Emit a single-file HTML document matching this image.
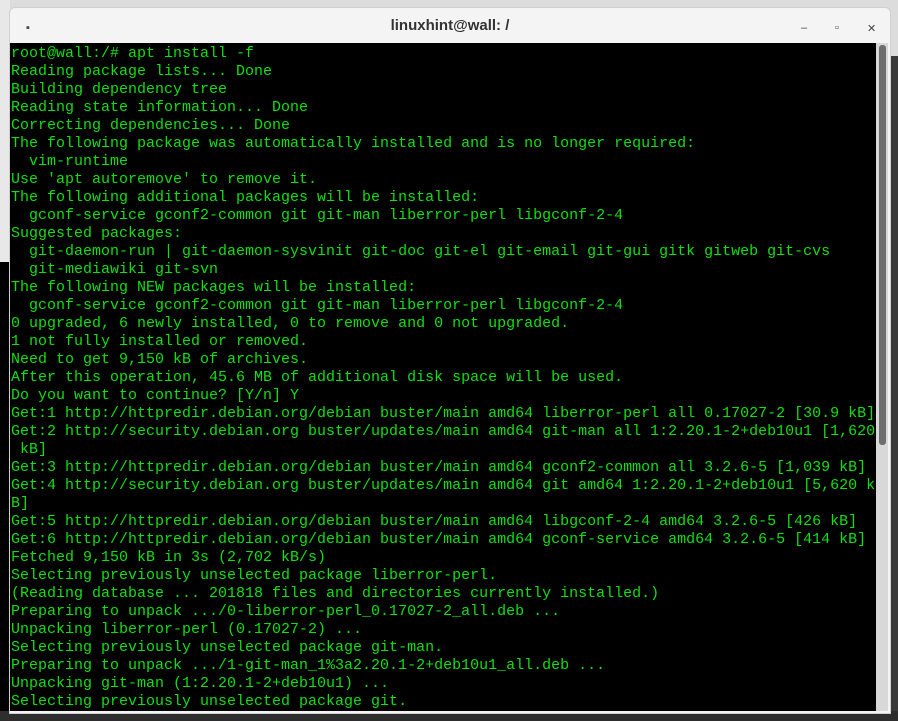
<!DOCTYPE html>
<html><head><style>
body{margin:0;width:898px;height:721px;overflow:hidden;background:#dcdcdc;position:relative;font-family:"Liberation Sans",sans-serif}
.left{position:absolute;left:0;top:0;width:10px;height:721px;background:#e8e8e8}
.leftdark{position:absolute;left:0;top:262px;width:10px;height:459px;background:#000}
.rightbg{position:absolute;left:889px;top:0;width:9px;height:721px;background:#dcdcdc}
.rightdark{position:absolute;left:889px;top:56px;width:9px;height:665px;background:#3a3a3a}
.bottom{position:absolute;left:0;top:711px;width:898px;height:10px;background:#2e2e2e}
.win{position:absolute;left:9px;top:7px;width:880px;height:705px;background:#f4f4f4;border-radius:6px 6px 0 0;border:1px solid #cfcfcf}
.title{position:absolute;left:0;top:9px;width:880px;text-align:center;font-weight:bold;font-size:15px;color:#333}
.term{position:absolute;left:10px;top:43px;width:866px;height:668px;background:#000;overflow:hidden}
pre{margin:0;padding:2px 0 0 1px;font-family:"Liberation Mono",monospace;font-size:15px;line-height:18px;color:#10e010}
.sb{position:absolute;left:876px;top:43px;width:12px;height:668px;background:#d8d8d8}
.thumb{position:absolute;left:879px;top:45px;width:7px;height:400px;background:#6e6e6e;border-radius:3px}
.btn{position:absolute;top:14px;font-size:11px;color:#444}
</style></head><body>
<div class="left"></div><div class="leftdark"></div>
<div class="rightbg"></div><div class="rightdark"></div>
<div class="bottom"></div>
<div class="win">
<div class="title">linuxhint@wall: /</div>
<div class="btn" style="left:16px">▪</div>
<div class="btn" style="left:791px">–</div>
<div class="btn" style="left:825px">▫</div>
<div class="btn" style="left:857px">✕</div>
</div>
<div class="term"><pre>root@wall:/# apt install -f
Reading package lists... Done
Building dependency tree
Reading state information... Done
Correcting dependencies... Done
The following package was automatically installed and is no longer required:
  vim-runtime
Use 'apt autoremove' to remove it.
The following additional packages will be installed:
  gconf-service gconf2-common git git-man liberror-perl libgconf-2-4
Suggested packages:
  git-daemon-run | git-daemon-sysvinit git-doc git-el git-email git-gui gitk gitweb git-cvs
  git-mediawiki git-svn
The following NEW packages will be installed:
  gconf-service gconf2-common git git-man liberror-perl libgconf-2-4
0 upgraded, 6 newly installed, 0 to remove and 0 not upgraded.
1 not fully installed or removed.
Need to get 9,150 kB of archives.
After this operation, 45.6 MB of additional disk space will be used.
Do you want to continue? [Y/n] Y
Get:1 http://httpredir.debian.org/debian buster/main amd64 liberror-perl all 0.17027-2 [30.9 kB]
Get:2 http://security.debian.org buster/updates/main amd64 git-man all 1:2.20.1-2+deb10u1 [1,620
 kB]
Get:3 http://httpredir.debian.org/debian buster/main amd64 gconf2-common all 3.2.6-5 [1,039 kB]
Get:4 http://security.debian.org buster/updates/main amd64 git amd64 1:2.20.1-2+deb10u1 [5,620 k
B]
Get:5 http://httpredir.debian.org/debian buster/main amd64 libgconf-2-4 amd64 3.2.6-5 [426 kB]
Get:6 http://httpredir.debian.org/debian buster/main amd64 gconf-service amd64 3.2.6-5 [414 kB]
Fetched 9,150 kB in 3s (2,702 kB/s)
Selecting previously unselected package liberror-perl.
(Reading database ... 201818 files and directories currently installed.)
Preparing to unpack .../0-liberror-perl_0.17027-2_all.deb ...
Unpacking liberror-perl (0.17027-2) ...
Selecting previously unselected package git-man.
Preparing to unpack .../1-git-man_1%3a2.20.1-2+deb10u1_all.deb ...
Unpacking git-man (1:2.20.1-2+deb10u1) ...
Selecting previously unselected package git.</pre></div>
<div class="sb"></div><div class="thumb"></div>
</body></html>
